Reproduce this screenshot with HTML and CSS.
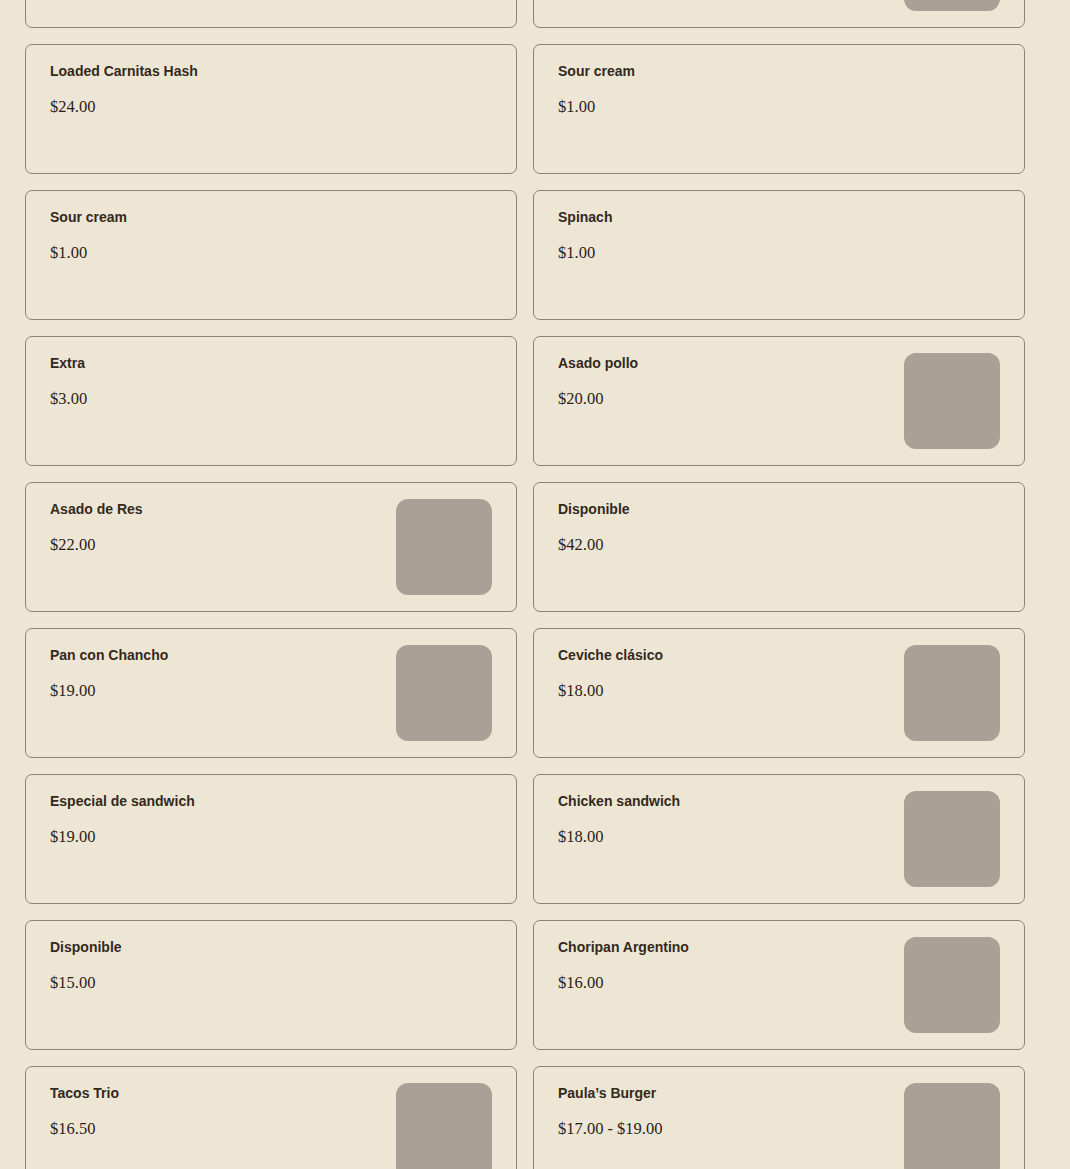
FILE: index.html
```html
<!DOCTYPE html>
<html lang="es">
<head>
<meta charset="utf-8">
<title>Menu</title>
<link rel="stylesheet" href="styles.css">
</head>
<body>
<main class="menu">
  <div class="card"></div>
  <div class="card"><div class="info"></div><div class="thumb"></div></div>

  <div class="card"><div class="info"><h3 class="name">Loaded Carnitas Hash</h3><p class="price">$24.00</p></div></div>
  <div class="card"><div class="info"><h3 class="name">Sour cream</h3><p class="price">$1.00</p></div></div>

  <div class="card"><div class="info"><h3 class="name">Sour cream</h3><p class="price">$1.00</p></div></div>
  <div class="card"><div class="info"><h3 class="name">Spinach</h3><p class="price">$1.00</p></div></div>

  <div class="card"><div class="info"><h3 class="name">Extra</h3><p class="price">$3.00</p></div></div>
  <div class="card"><div class="info"><h3 class="name">Asado pollo</h3><p class="price">$20.00</p></div><div class="thumb"></div></div>

  <div class="card"><div class="info"><h3 class="name">Asado de Res</h3><p class="price">$22.00</p></div><div class="thumb"></div></div>
  <div class="card"><div class="info"><h3 class="name">Disponible</h3><p class="price">$42.00</p></div></div>

  <div class="card"><div class="info"><h3 class="name">Pan con Chancho</h3><p class="price">$19.00</p></div><div class="thumb"></div></div>
  <div class="card"><div class="info"><h3 class="name">Ceviche clásico</h3><p class="price">$18.00</p></div><div class="thumb"></div></div>

  <div class="card"><div class="info"><h3 class="name">Especial de sandwich</h3><p class="price">$19.00</p></div></div>
  <div class="card"><div class="info"><h3 class="name">Chicken sandwich</h3><p class="price">$18.00</p></div><div class="thumb"></div></div>

  <div class="card"><div class="info"><h3 class="name">Disponible</h3><p class="price">$15.00</p></div></div>
  <div class="card"><div class="info"><h3 class="name">Choripan Argentino</h3><p class="price">$16.00</p></div><div class="thumb"></div></div>

  <div class="card"><div class="info"><h3 class="name">Tacos Trio</h3><p class="price">$16.50</p></div><div class="thumb"></div></div>
  <div class="card"><div class="info"><h3 class="name">Paula’s Burger</h3><p class="price">$17.00 - $19.00</p></div><div class="thumb"></div></div>
</main>
</body>
</html>
```
FILE: styles.css
```css
html, body {
  margin: 0;
  padding: 0;
  background: #eee6d5;
}
body {
  overflow: hidden;
  height: 1169px;
  color: #2e2419;
}
.menu {
  display: grid;
  grid-template-columns: 492px 492px;
  column-gap: 16px;
  row-gap: 16px;
  margin: -102px 0 0 25px;
  width: 1000px;
}
.card {
  box-sizing: border-box;
  height: 130px;
  border: 1px solid #8c8371;
  border-radius: 7px;
  padding: 16px 24px;
  display: flex;
  justify-content: space-between;
  align-items: flex-start;
  background: #eee6d5;
}
.info {
  display: flex;
  flex-direction: column;
}
.name {
  margin: 0;
  font-family: "Liberation Sans", Arial, sans-serif;
  font-weight: 700;
  font-size: 14px;
  line-height: 20px;
  color: #33291d;
}
.price {
  margin: 14px 0 0;
  font-family: "Liberation Serif", "Times New Roman", serif;
  font-size: 16.5px;
  line-height: 24px;
  color: #2b2117;
}
.thumb {
  width: 96px;
  height: 96px;
  border-radius: 12px;
  background: #a9a195;
  flex: none;
}
```
